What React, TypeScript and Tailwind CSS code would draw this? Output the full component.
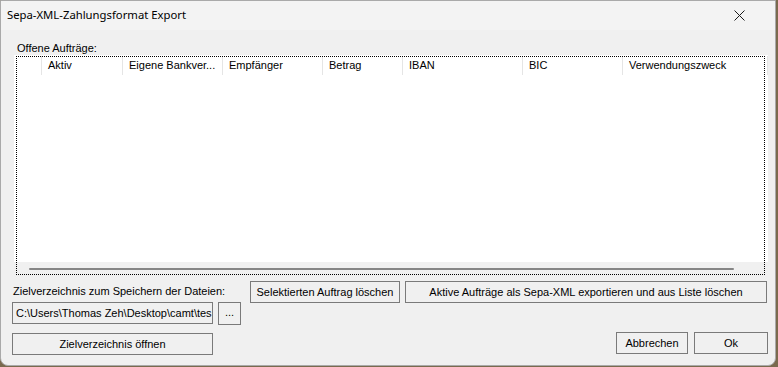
const columns = [
  { label: "", width: 26 },
  { label: "Aktiv", width: 81 },
  { label: "Eigene Bankver...", width: 100 },
  { label: "Empfänger", width: 100 },
  { label: "Betrag", width: 80 },
  { label: "IBAN", width: 120 },
  { label: "BIC", width: 100 },
  { label: "Verwendungszweck", width: 145 },
];

function WinButton({ children, className = "" }: { children: React.ReactNode; className?: string }) {
  return (
    <button
      className={`flex items-center justify-center border border-[#7a7a7a] bg-[#f0f0f0] text-[11px] text-black leading-none ${className}`}
    >
      {children}
    </button>
  );
}

export default function App() {
  return (
    <div className="flex w-[778px] h-[367px] bg-[#7a6a4e] font-['Liberation_Sans',Arial,sans-serif]">
      <div className="w-[776px] h-[366px] flex flex-col bg-[#f0f0f0] border border-[#a9a9a9] rounded-b-[8px] overflow-hidden">
        {/* Titelleiste */}
        <div className="h-[29px] shrink-0 flex items-center justify-between bg-[#f3f3f3] pl-[6px] pr-[30px]">
          <span className="text-[11.3px] text-black font-['Noto_Sans',sans-serif]">Sepa-XML-Zahlungsformat Export</span>
          <svg width="11" height="11" viewBox="0 0 11 11" className="mt-[-1px]">
            <path d="M0.5 0.5 L10.5 10.5 M10.5 0.5 L0.5 10.5" stroke="#1a1a1a" strokeWidth="1" />
          </svg>
        </div>

        {/* Inhalt */}
        <div className="flex-1 flex flex-col pl-[11px] pr-[8px]">
          <div className="mt-[13px] ml-[5px] text-[11px] leading-[11px] text-black">Offene Aufträge:</div>

          {/* Liste */}
          <div className="relative ml-[2px] mt-[1px] w-[754px] h-[220px] bg-white flex flex-col">
            <div className="flex h-[21px] items-center pl-[2px]">
              {columns.map((c, i) => (
                <div
                  key={i}
                  style={{ width: c.width }}
                  className="h-[19px] flex items-center pl-[6px] border-r border-[#e5e5e5] text-[11px] text-black whitespace-nowrap overflow-hidden"
                >
                  {c.label}
                </div>
              ))}
            </div>
            <div className="flex-1" />
            <div className="h-[13px] bg-[#f0f0f0] flex items-start pt-[6px] pl-[15px]">
              <div className="w-[705px] h-[2px] bg-[#858585] rounded-full" />
            </div>
            <div className="absolute left-[2px] top-[1px] right-[3px] bottom-[0px] border border-dotted border-black pointer-events-none" />
          </div>

          {/* Untere Steuerelemente */}
          <div className="flex mt-[6px]">
            <div className="flex flex-col w-[229px]">
              <div className="mt-[5px] ml-[1px] text-[11px] leading-[11px] text-black whitespace-nowrap">
                Zielverzeichnis zum Speichern der Dateien:
              </div>
              <div className="flex mt-[5px] gap-[5px]">
                <div className="w-[201px] h-[22px] flex items-center border border-[#7a7a7a] bg-[#f0f0f0] pl-[3px] text-[11px] text-black whitespace-nowrap overflow-hidden">
                  C:\Users\Thomas Zeh\Desktop\camt\tes
                </div>
                <WinButton className="w-[23px] h-[23px] pb-[3px]">...</WinButton>
              </div>
              <WinButton className="mt-[8px] w-[201px] h-[22px]">Zielverzeichnis öffnen</WinButton>
            </div>
            <div className="flex flex-col flex-1 ml-[9px]">
              <div className="flex gap-[5px]">
                <WinButton className="w-[150px] h-[22px]">Selektierten Auftrag löschen</WinButton>
                <WinButton className="w-[362px] h-[22px]">
                  Aktive Aufträge als Sepa-XML exportieren und aus Liste löschen
                </WinButton>
              </div>
              <div className="flex justify-end gap-[6px] mt-[29px] mr-[-1px]">
                <WinButton className="w-[72px] h-[22px]">Abbrechen</WinButton>
                <WinButton className="w-[74px] h-[22px]">Ok</WinButton>
              </div>
            </div>
          </div>
        </div>
      </div>
    </div>
  );
}
